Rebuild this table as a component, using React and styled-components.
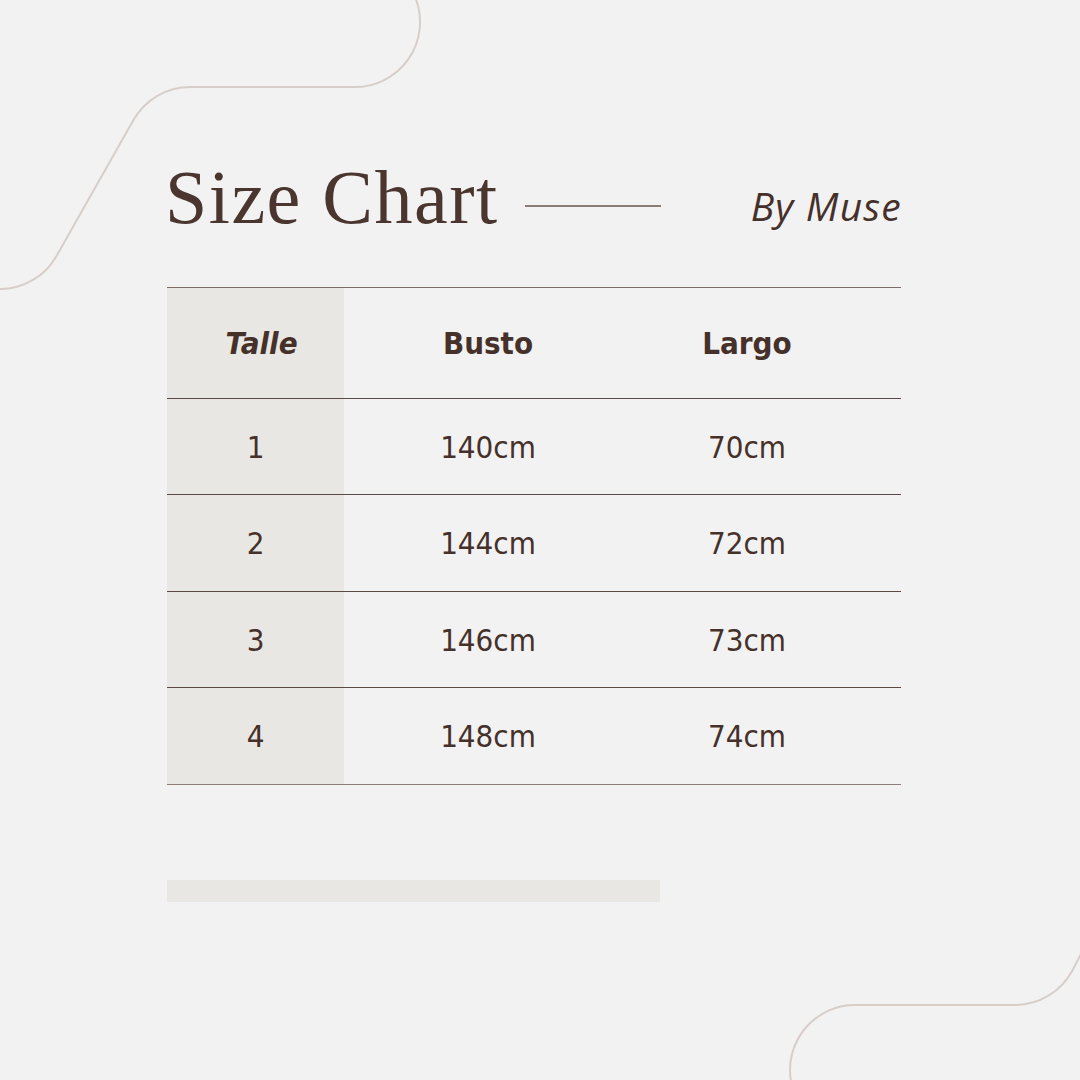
import React from 'react'
import styled, { createGlobalStyle } from 'styled-components'

const GlobalStyle = createGlobalStyle`
  html, body {
    margin: 0;
    padding: 0;
    background: #f2f2f2;
  }
`

const Canvas = styled.div`
  position: relative;
  width: 1080px;
  height: 1080px;
  overflow: hidden;
  background: #f2f2f2;
  color: #45312a;
`

const Decor = styled.svg`
  position: absolute;
  top: 0;
  left: 0;
  width: 1080px;
  height: 1080px;
  pointer-events: none;
`

const Content = styled.div`
  position: relative;
  display: flex;
  flex-direction: column;
  width: 734px;
  margin-left: 167px;
  padding-top: 159px;
`

const Heading = styled.div`
  display: flex;
  align-items: center;
  height: 76px;
`

const Title = styled.h1`
  margin: 0;
  font-family: 'Liberation Serif', 'DejaVu Serif', serif;
  font-weight: 400;
  font-size: 76px;
  line-height: 76px;
  letter-spacing: 1.5px;
  color: #4a362e;
  margin-left: -2px;
`

const Rule = styled.span`
  display: block;
  width: 136px;
  height: 2px;
  margin-left: 26px;
  margin-top: 18px;
  background: #8a7d77;
`

const Brand = styled.span`
  margin-left: auto;
  margin-top: 16px;
  font-family: 'Open Sans', 'Noto Sans', sans-serif;
  font-style: italic;
  font-size: 39px;
  letter-spacing: 1.2px;
  margin-right: -1px;
  color: #45312a;
`

const Table = styled.div`
  display: flex;
  flex-direction: column;
  margin-top: 52px;
  border-top: 1px solid #7a6c66;
`

const Row = styled.div`
  display: grid;
  grid-template-columns: 177px 288px 1fr;
  height: ${(p) => p.$height}px;
  border-bottom: 1px solid ${(p) => (p.$last ? '#8c7f79' : '#5a4a43')};
  box-sizing: border-box;
`

const Cell = styled.div`
  display: flex;
  align-items: center;
  justify-content: center;
  padding-right: ${(p) => (p.$tail ? '39px' : '0')};
  padding-left: ${(p) => (p.$italic ? '12px' : '0')};
  background: ${(p) => (p.$shade ? '#e8e7e3' : 'transparent')};
  font-family: 'DejaVu Sans Condensed', 'DejaVu Sans', sans-serif;
  font-stretch: condensed;
  font-size: 31px;
  font-weight: ${(p) => (p.$head ? 700 : 400)};
  font-style: ${(p) => (p.$italic ? 'italic' : 'normal')};
  color: #45312a;
`

const Bar = styled.div`
  width: 493px;
  height: 22px;
  margin-top: 95px;
  background: #e8e7e3;
`

const rows = [
  ['1', '140cm', '70cm'],
  ['2', '144cm', '72cm'],
  ['3', '146cm', '73cm'],
  ['4', '148cm', '74cm'],
]

export default function App() {
  return (
    <Canvas>
      <GlobalStyle />
      <Decor viewBox="0 0 1080 1080">
        <g fill="none" stroke="#d8cec9" strokeWidth="2">
          <path d="M -20 289 L 0 289 A 65 65 0 0 0 56.4 256.2 L 133.6 119.8 A 65 65 0 0 1 190 87 L 355 87 A 65 65 0 0 0 416.2 0 L 414 -10" />
          <path d="M 790.8 1090 L 790.8 1080 A 65 65 0 0 1 855 1005 L 1015 1005 A 65 65 0 0 0 1072.4 970.5 L 1132 856" />
        </g>
      </Decor>
      <Content>
        <Heading>
          <Title>Size Chart</Title>
          <Rule />
          <Brand>By Muse</Brand>
        </Heading>
        <Table>
          <Row $height={111}>
            <Cell $shade $head $italic>Talle</Cell>
            <Cell $head>Busto</Cell>
            <Cell $head $tail>Largo</Cell>
          </Row>
          {rows.map((r, i) => (
            <Row key={r[0]} $height={i % 2 ? 97 : 96} $last={i === rows.length - 1}>
              <Cell $shade>{r[0]}</Cell>
              <Cell>{r[1]}</Cell>
              <Cell $tail>{r[2]}</Cell>
            </Row>
          ))}
        </Table>
        <Bar />
      </Content>
    </Canvas>
  )
}
